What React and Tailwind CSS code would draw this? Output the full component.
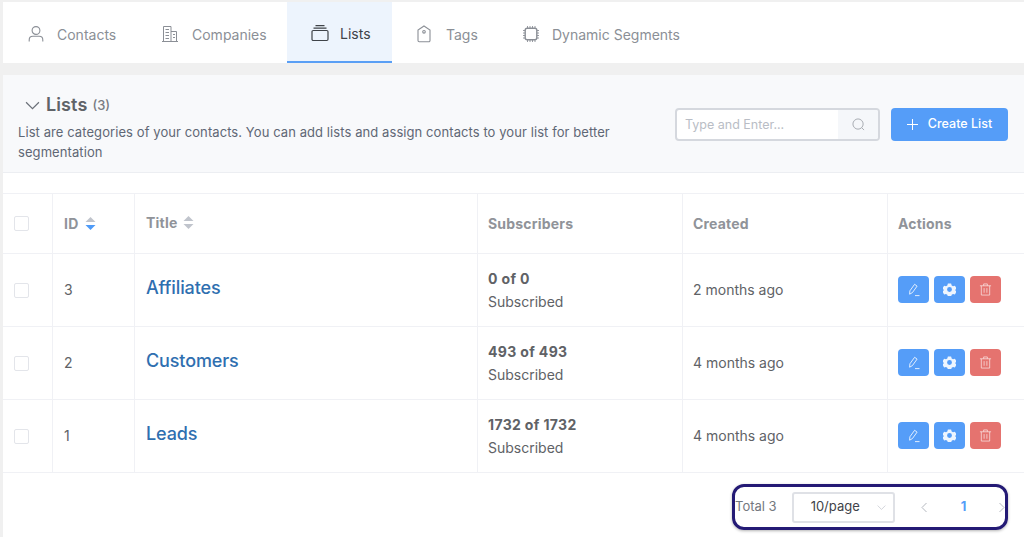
import React from 'react';

const FONT = { fontFamily: 'Inter, "Noto Sans", sans-serif' };

const UserIcon = () => (
  <svg width="18" height="18" viewBox="0 0 18 18" fill="none" stroke="currentColor" strokeWidth="1.1">
    <circle cx="9" cy="5.5" r="3.9" />
    <path d="M2.2 16.5v-1.6c0-2 1.6-3.6 3.6-3.6h6.4c2 0 3.6 1.6 3.6 3.6v1.6" />
  </svg>
);

const BuildingIcon = () => (
  <svg width="18" height="18" viewBox="0 0 18 18" fill="none" stroke="currentColor" strokeWidth="1">
    <path d="M1 16.5h16M2.5 16.5V1.5h7.5v15M10 6.5h5.5v10" />
    <path d="M4.5 4.5h3.5M4.5 7.5h3.5M4.5 10.5h3.5M4.5 13.5h3.5M12 9.5h2M12 12.5h2" />
  </svg>
);

const ListsIcon = () => (
  <svg width="18" height="18" viewBox="0 0 18 18" fill="none" stroke="currentColor" strokeWidth="1.2">
    <rect x="1" y="6.5" width="16" height="10" rx="1.2" />
    <path d="M2.5 4.2h13M4.5 1.6h9" />
  </svg>
);

const TagIcon = () => (
  <svg width="18" height="18" viewBox="0 0 18 18" fill="none" stroke="currentColor" strokeWidth="1.1">
    <path d="M9 1 L15 5 V15.5a1.2 1.2 0 0 1-1.2 1.2H4.2A1.2 1.2 0 0 1 3 15.5V5Z" />
    <circle cx="9" cy="6.8" r="1.3" />
  </svg>
);

const ChipIcon = () => (
  <svg width="18" height="18" viewBox="0 0 18 18" fill="none" stroke="currentColor" strokeWidth="1.1">
    <rect x="3.2" y="3.2" width="11.6" height="11.6" rx="2" strokeWidth="1.4" />
    <path d="M5.5 1v2M8 1v2M10.5 1v2M13 1v2M5.5 15v2M8 15v2M10.5 15v2M13 15v2M1 5.5h2M1 8h2M1 10.5h2M1 13h2M15 5.5h2M15 8h2M15 10.5h2M15 13h2" strokeWidth="0.9" />
  </svg>
);

const Chevron = ({ size = 14, className = '' }) => (
  <svg width={size} height={size} viewBox="0 0 14 14" fill="none" stroke="currentColor" strokeWidth="1.1" className={className}>
    <path d="M1 4l6 6 6-6" />
  </svg>
);

const SortCaret = ({ active }) => (
  <svg width="11" height="15" viewBox="0 0 11 15" className="text-[#c0c4cc]" fill="currentColor">
    <path d="M5.5 1l5 5h-10z" />
    <path d="M5.5 14l5-5h-10z" fill={active ? '#4f9bf8' : 'currentColor'} />
  </svg>
);

const Checkbox = () => <span className="block h-[15px] w-[15px] rounded-[2px] border border-[#e3e5ea] bg-white" />;

const PenIcon = () => (
  <svg width="14" height="14" viewBox="0 0 14 14" fill="none" stroke="currentColor" strokeWidth="0.9">
    <path d="M2.6 11.2l.3-3.4L7.600 1.300l2.500 1.800-4.700 6.500z" />
    <path d="M8 12.600h4.500" />
  </svg>
);

const GearIcon = () => (
  <svg width="13" height="13" viewBox="0 0 24 24" fill="currentColor">
    <path fillRule="evenodd" d="M9 1h6l1 3.500 2.500 1.400 3.500-.9 3 5.200-2.500 2.600v.4l2.500 2.600-3 5.200-3.500-.9-2.500 1.400-1 3.500H9l-1-3.500-2.500-1.400-3.500.9-3-5.200 2.500-2.600v-.4L-1 10.200l3-5.200 3.500.9L8 4.500zM12 7.500a4.500 4.500 0 1 0 0 9 4.500 4.500 0 0 0 0-9z" />
  </svg>
);

const TrashIcon = () => (
  <svg width="13" height="13" viewBox="0 0 14 14" fill="none" stroke="currentColor" strokeWidth="0.9" opacity="0.8">
    <path d="M1 3h12M5 3V1h4v2M2.500 3v10h9V3M5.500 5.500v5M8.500 5.500v5" />
  </svg>
);

const ActionButton = ({ className, children }) => (
  <button className={`flex h-[27px] w-[31px] items-center justify-center rounded-[4px] text-white/90 ${className}`}>{children}</button>
);

const tabs = [
  { label: 'Contacts', icon: <UserIcon />, cls: 'w-[136px] pl-[24px]', gap: 'gap-[12px]' },
  { label: 'Companies', icon: <BuildingIcon />, cls: 'w-[148px] pl-[22px]', gap: 'gap-[13px]' },
  { label: 'Lists', icon: <ListsIcon />, cls: 'w-[105px] pl-[24px]', gap: 'gap-[11px]', active: true },
  { label: 'Tags', icon: <TagIcon />, cls: 'w-[118px] pl-[23px]', gap: 'gap-[13px]' },
  { label: 'Dynamic Segments', icon: <ChipIcon />, cls: 'pl-[12px]', gap: 'gap-[12px]' },
];

const rows = [
  { id: 3, title: 'Affiliates', subs: '0 of 0', created: '2 months ago' },
  { id: 2, title: 'Customers', subs: '493 of 493', created: '4 months ago' },
  { id: 1, title: 'Leads', subs: '1732 of 1732', created: '4 months ago' },
];

const cols = 'grid grid-cols-[50px_82px_343px_205px_205px_1fr]';
const cell = 'flex border-r border-[#f0f1f5] px-[10px] last:border-r-0';

export default function App() {
  return (
    <div style={FONT} className="h-[537px] w-[1024px] overflow-hidden bg-[#f0f0f0] pl-[3px] pt-[2px]">
      <div className="flex h-[61px] bg-white">
        {tabs.map((t) => (
          <div
            key={t.label}
            className={`flex items-center pt-[3px] text-[14px] ${t.cls} ${t.gap} ${
              t.active ? 'border-b-2 border-[#5a9ff5] bg-[#edf4fd] text-[#3f4349]' : 'text-[#8b8f96]'
            }`}
          >
            {t.icon}
            <span>{t.label}</span>
          </div>
        ))}
      </div>

      <div className="mt-[12px] flex h-[98px] justify-between border-b border-[#eceef2] bg-[#f8f9fb] pl-[15px] pr-[16px]">
        <div className="w-[620px]">
          <div className="mt-[18px] flex items-center pl-[7px] text-[#5f6368]">
            <Chevron size={15} className="text-[#6b7078]" />
            <span className="ml-[6px] text-[18px] font-semibold leading-[24px] tracking-[0.1px]">Lists</span>
            <span className="ml-[5px] mt-[2px] text-[13px] font-medium text-[#777b82]">(3)</span>
          </div>
          <p className="mt-[5px] text-[13px] leading-[20px] tracking-[0.08px] text-[#5f6775]">
            List are categories of your contacts. You can add lists and assign contacts to your list for better segmentation
          </p>
        </div>
        <div className="mt-[33px] flex items-start gap-[11px]">
          <div className="flex h-[33px] w-[205px] overflow-hidden rounded-[4px] border-2 border-[#d5d8de] bg-white">
            <span className="flex flex-1 items-center pl-[8px] pt-[1px] text-[12.5px] text-[#b9bdc5]">Type and Enter...</span>
            <span className="flex w-[40px] items-center justify-center bg-[#f5f7fa] text-[#a3a7ae]">
              <svg width="13" height="13" viewBox="0 0 14 14" fill="none" stroke="currentColor" strokeWidth="1">
                <circle cx="6.500" cy="6.500" r="5.500" />
                <path d="M10.500 10.500l2.500 2.500" />
              </svg>
            </span>
          </div>
          <button className="flex h-[33px] w-[117px] items-center justify-center gap-[10px] rounded-[4px] bg-[#559df8] text-[12.5px] font-medium text-white">
            <svg width="11" height="11" viewBox="0 0 11 11" stroke="currentColor" strokeWidth="1">
              <path d="M5.500 0v11M0 5.500h11" />
            </svg>
            Create List
          </button>
        </div>
      </div>

      <div className="h-[364px] bg-white pt-[20px]">
        <div className="border-y border-[#f0f1f5]">
          <div className={`${cols} h-[59px] text-[14px] font-bold tracking-[0.2px] text-[#909399]`}>
            <div className={`${cell} items-center pl-[11px]`}><Checkbox /></div>
            <div className={`${cell} items-center gap-[7px] pl-[11px]`}>ID <SortCaret active /></div>
            <div className={`${cell} items-center gap-[6px] pb-[3px] pl-[11px]`}>Title <SortCaret /></div>
            <div className={`${cell} items-center`}>Subscribers</div>
            <div className={`${cell} items-center`}>Created</div>
            <div className={`${cell} items-center`}>Actions</div>
          </div>
          {rows.map((r) => (
            <div key={r.id} className={`${cols} h-[73px] border-t border-[#f0f1f5] text-[14px] text-[#606266]`}>
              <div className={`${cell} items-center pl-[11px]`}><Checkbox /></div>
              <div className={`${cell} items-center pb-[2px] pl-[11px]`}>{r.id}</div>
              <div className={`${cell} items-center pb-[5px] pl-[11px] text-[18px] font-medium tracking-[-0.12px] text-[#2f6fb0]`}>{r.title}</div>
              <div className={`${cell} flex-col justify-center pb-[1px]`}>
                <span className="font-bold leading-[23px] tracking-[0.35px]">{r.subs}</span>
                <span className="leading-[23px]">Subscribed</span>
              </div>
              <div className={`${cell} items-center pb-[2px]`}>{r.created}</div>
              <div className={`${cell} items-center gap-[5px] pb-[1px]`}>
                <ActionButton className="bg-[#559df8]"><PenIcon /></ActionButton>
                <ActionButton className="bg-[#559df8]"><GearIcon /></ActionButton>
                <ActionButton className="bg-[#e5736f]"><TrashIcon /></ActionButton>
              </div>
            </div>
          ))}
        </div>
        <div className="flex justify-end pr-[16px] pt-[11px]">
          <div className="flex h-[46px] w-[276px] items-center rounded-[12px] border-[3px] border-[#241a75] text-[13px] shadow-[0_1px_3px_rgba(0,0,0,0.3)]">
            <span className="shrink-0 whitespace-nowrap text-[#74787f]">Total 3</span>
            <span className="ml-[15px] flex h-[31px] w-[103px] shrink-0 items-center justify-between rounded-[3px] border-2 border-[#dfe1e6] pl-[17px] pr-[7px] text-[#3f4349]">
              10/page
              <Chevron size={9} className="text-[#c0c4cc]" />
            </span>
            <svg width="8" height="11" viewBox="0 0 8 11" fill="none" stroke="#b4b8bf" strokeWidth="1" className="ml-[25px] shrink-0">
              <path d="M6.500 1L2 5.500l4.500 4.500" />
            </svg>
            <span className="ml-[33px] shrink-0 text-[13px] font-bold text-[#559df8]">1</span>
            <svg width="8" height="11" viewBox="0 0 8 11" fill="none" stroke="#b4b8bf" strokeWidth="1" className="ml-[32px] shrink-0">
              <path d="M1.500 1L6 5.500 1.500 10" />
            </svg>
          </div>
        </div>
      </div>
    </div>
  );
}
